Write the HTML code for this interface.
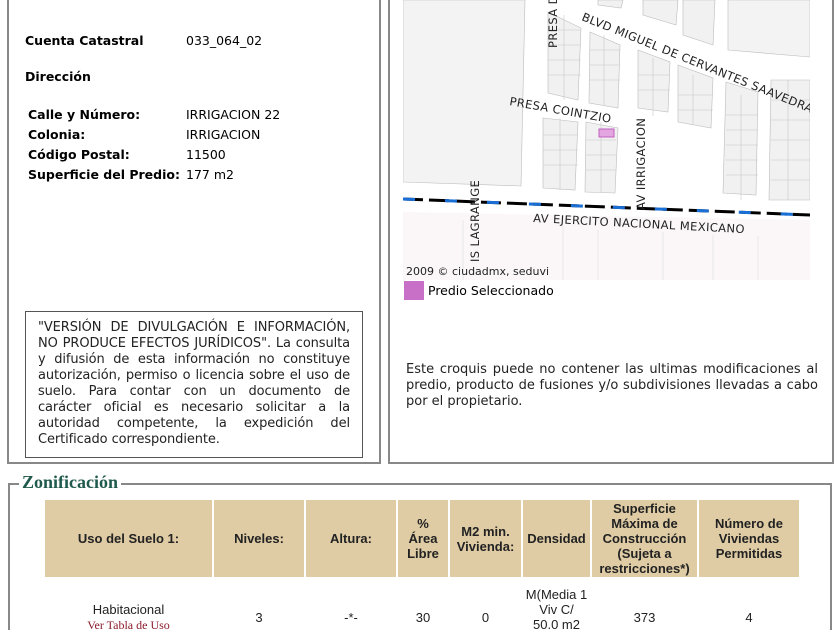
<!DOCTYPE html>
<html><head><meta charset="utf-8"><style>
html,body{margin:0;width:840px;height:630px;overflow:hidden}
body{background:#fff;font-family:"DejaVu Sans",Verdana,sans-serif;font-size:12.5px;color:#000;position:relative}
#wrap{position:absolute;left:0;top:0;width:840px;height:630px;overflow:hidden}
.a{position:absolute;white-space:nowrap}
.b{font-weight:bold}
.box{position:absolute;border:2px solid #888;border-top:none;box-sizing:border-box}
.note{position:absolute;left:25px;top:311px;width:338px;height:147px;border:1px solid #555;box-sizing:border-box;padding:8px 12px;font-size:13px;line-height:16px;text-align:justify;color:#222;letter-spacing:-0.1px}
table{position:absolute;left:43px;top:500px;border-collapse:separate;border-spacing:2px 0;font-family:"Liberation Sans",Tahoma,sans-serif;font-size:13px}
th{background:#dfcca5;font-weight:bold;height:77px;padding:0;line-height:15px;color:#222}
td{text-align:center;height:80px;color:#222;vertical-align:middle;line-height:15px;padding:0}
</style></head><body><div id="wrap">
<div class="box" style="left:7px;top:-2px;width:374px;height:466px"></div>
<div class="box" style="left:388px;top:-2px;width:446px;height:466px"></div>
<div class="a b" style="left:25px;top:33px">Cuenta Catastral</div>
<div class="a" style="left:186px;top:33px">033_064_02</div>
<div class="a b" style="left:25px;top:69px">Dirección</div>
<div class="a b" style="left:28px;top:107px">Calle y Número:</div>
<div class="a" style="left:186px;top:107px">IRRIGACION 22</div>
<div class="a b" style="left:28px;top:127px">Colonia:</div>
<div class="a" style="left:186px;top:127px">IRRIGACION</div>
<div class="a b" style="left:28px;top:147px">Código Postal:</div>
<div class="a" style="left:186px;top:147px">11500</div>
<div class="a b" style="left:28px;top:167px">Superficie del Predio:</div>
<div class="a" style="left:186px;top:167px">177 m2</div>
<div class="note">"VERSIÓN DE DIVULGACIÓN E INFORMACIÓN, NO PRODUCE EFECTOS JURÍDICOS". La consulta y difusión de esta información no constituye autorización, permiso o licencia sobre el uso de suelo. Para contar con un documento de carácter oficial es necesario solicitar a la autoridad competente, la expedición del Certificado correspondiente.</div>

<svg class="a" style="left:403px;top:0" width="407" height="280" viewBox="0 0 407 280">
<rect width="407" height="280" fill="#fff"/>
<polygon points="0,0 122,0 118,186 0,182" fill="#f3f3f3" stroke="#bbb" stroke-width="0.6"/>
<polygon points="195,0 220,0 218,8 195,5" fill="#f1f1f1" stroke="#bbb" stroke-width="0.6"/>
<polygon points="240,0 275,0 273,25 240,15" fill="#f1f1f1" stroke="#bbb" stroke-width="0.6"/>
<polygon points="280,0 312,0 310,45 280,35" fill="#f1f1f1" stroke="#bbb" stroke-width="0.6"/>
<polygon points="325,0 407,0 407,57 325,50" fill="#f3f3f3" stroke="#bbb" stroke-width="0.6"/>
<polygon points="145,12 178,28 175,100 145,93" fill="#f1f1f1" stroke="#bbb" stroke-width="0.6"/>
<polygon points="187,32 217,45 215,108 186,103" fill="#f1f1f1" stroke="#bbb" stroke-width="0.6"/>
<polygon points="235,50 267,62 265,112 235,108" fill="#f1f1f1" stroke="#bbb" stroke-width="0.6"/>
<polygon points="275,65 310,78 308,128 275,122" fill="#f1f1f1" stroke="#bbb" stroke-width="0.6"/>
<polygon points="323,82 355,92 353,195 320,193" fill="#f1f1f1" stroke="#bbb" stroke-width="0.6"/>
<polygon points="140,118 175,122 172,190 140,188" fill="#f1f1f1" stroke="#bbb" stroke-width="0.6"/>
<polygon points="183,122 215,128 212,193 182,192" fill="#f1f1f1" stroke="#bbb" stroke-width="0.6"/>
<polygon points="368,80 407,80 407,200 366,200" fill="#f1f1f1" stroke="#bbb" stroke-width="0.6"/>
<g stroke="#c8c8c8" stroke-width="0.6">
<path d="M145,30h33M145,45h33M145,60h33M145,75h33M161,15v85M187,50h30M187,65h30M187,80h30M201,35v70M235,75h32M235,90h32M250,58v58M275,95h35M275,110h35M290,75v50M323,115h32M323,130h32M323,145h32M323,160h32M323,175h32M338,95v105M368,100h42M368,120h42M368,140h42M368,160h42M368,180h42M385,80v120M140,135h35M140,150h35M140,165h35M157,118v72M183,140h30M183,155h30M183,170h30M198,122v70"/>
</g>
<polygon points="0,212 407,220 407,280 0,280" fill="#fbf7f8"/>
<g stroke="#ddd" stroke-width="0.6" fill="none"><path d="M60,220v60M160,225v55M195,230v50M260,232v48M310,235v45M355,236v44"/></g>
<path d="M0,199 L407,215" stroke="#000" stroke-width="3" stroke-dasharray="20,6"/>
<path d="M0,199 L407,215" stroke="#1a6fd6" stroke-width="3" stroke-dasharray="12,30"/>
<rect x="196" y="129" width="15" height="8" fill="#e3a6e0" stroke="#c060c0"/>
<g font-family="DejaVu Sans,sans-serif" font-size="11.5" fill="#222" letter-spacing="0.4">
<text transform="translate(178,20) rotate(22)">BLVD MIGUEL DE CERVANTES SAAVEDRA</text>
<text transform="translate(106,105) rotate(10)">PRESA COINTZIO</text>
<text transform="translate(154,48) rotate(-90)">PRESA D</text>
<text transform="translate(242,210) rotate(-90)">AV IRRIGACION</text>
<text transform="translate(76,262) rotate(-90)">IS LAGRANGE</text>
<text transform="translate(130,222) rotate(3)">AV EJERCITO NACIONAL MEXICANO</text>
</g>
<text x="3" y="275" font-family="DejaVu Sans,sans-serif" font-size="11" fill="#222">2009 © ciudadmx, seduvi</text>
</svg>
<div class="a" style="left:404px;top:281px;width:20px;height:19px;background:#c86fc8"></div>
<div class="a" style="left:428px;top:283px">Predio Seleccionado</div>
<div class="a" style="left:406px;top:362px;width:412px;white-space:normal;line-height:16px;color:#222;font-size:13px;text-align:justify">Este croquis puede no contener las ultimas modificaciones al predio, producto de fusiones y/o subdivisiones llevadas a cabo por el propietario.</div>

<div class="a" style="left:8px;top:483px;width:824px;height:147px;border:2px solid #888;border-bottom:none;box-sizing:border-box;overflow:hidden"></div>
<div class="a" style="left:19px;top:472px;background:#fff;padding:0 3px;font-family:'Liberation Serif',serif;font-weight:bold;font-size:18px;color:#1f5a4c">Zonificación</div>
<div class="a" style="left:0;top:0;width:840px;height:630px;overflow:hidden">
<table><tr>
<th style="width:167px">Uso del Suelo 1:</th><th style="width:90px">Niveles:</th><th style="width:90px">Altura:</th><th style="width:50px">%<br>Área<br>Libre</th><th style="width:71px">M2 min.<br>Vivienda:</th><th style="width:67px">Densidad</th><th style="width:105px">Superficie<br>Máxima de<br>Construcción<br>(Sujeta a<br>restricciones*)</th><th style="width:100px">Número de<br>Viviendas<br>Permitidas</th>
</tr><tr>
<td>Habitacional<br><span style="font-family:'Liberation Serif',serif;color:#8b1c2c;font-size:12px">Ver Tabla de Uso</span></td><td>3</td><td>-*-</td><td>30</td><td>0</td><td>M(Media 1<br>Viv C/<br>50.0 m2<br>de</td><td>373</td><td>4</td>
</tr></table>
</div>
</div></body></html>
